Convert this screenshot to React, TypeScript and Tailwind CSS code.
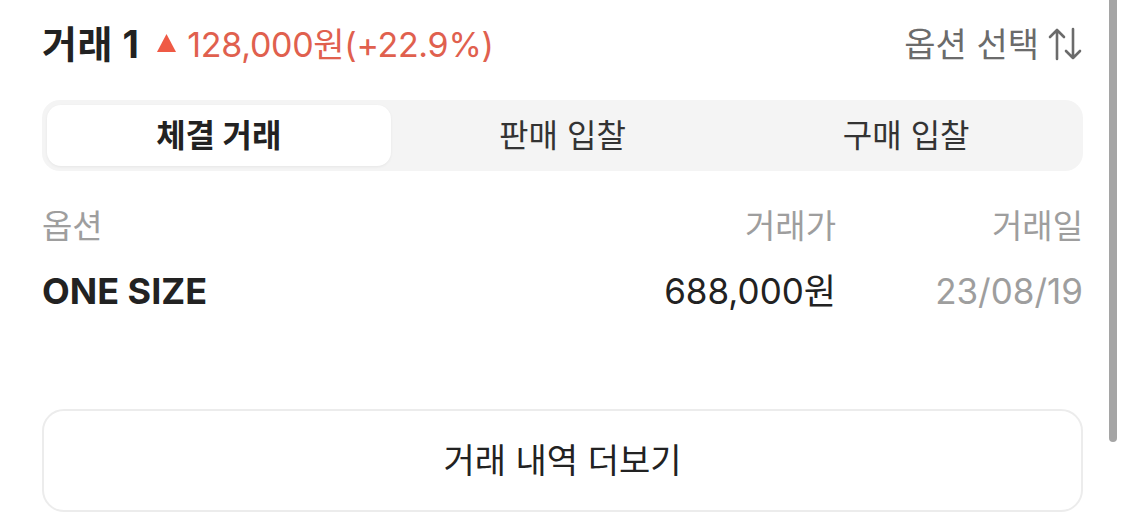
import React from "react";

const font = { fontFamily: 'Inter, "Noto Sans CJK KR", sans-serif' };

export default function App() {
  return (
    <div className="relative w-[1125px] h-[531px] bg-white overflow-hidden px-[42px]" style={font}>
      <div className="h-[88px] flex items-center justify-between">
        <div className="flex items-center">
          <span className="text-[38px] font-bold text-[#222] tracking-[0.5px]">거래 1</span>
          <svg width="19" height="18" viewBox="0 0 19 18" className="ml-[18px] mt-[-2px]">
            <polygon points="9.5,0 19,18 0,18" fill="#ef5a45" />
          </svg>
          <span className="ml-[11px] text-[34px] text-[#e0604e] tracking-[-0.3px]">128,000원(+22.9%)</span>
        </div>
        <div className="flex items-center text-[34px] text-[#6b6b6b]">
          <span>옵션 선택</span>
          <svg width="36" height="34" viewBox="0 0 36 34" className="ml-[8px]" fill="none" stroke="#6b6b6b" strokeWidth="2.6" strokeLinecap="round" strokeLinejoin="round">
            <path d="M10 32 V3 M3 10 L10 3 L17 10" />
            <path d="M26 2 V31 M19 24 L26 31 L33 24" />
          </svg>
        </div>
      </div>

      <div className="mt-[12px] h-[71px] rounded-[18px] bg-[#f4f4f4] p-[5px] grid grid-cols-3">
        <div className="rounded-[14px] bg-white shadow-[0_1px_3px_rgba(0,0,0,0.06)] flex items-center justify-center text-[32px] font-bold text-[#222]">
          체결 거래
        </div>
        <div className="flex items-center justify-center text-[32px] text-[#333]">판매 입찰</div>
        <div className="flex items-center justify-center text-[32px] text-[#333]">구매 입찰</div>
      </div>

      <div className="mt-[28px] h-[56px] flex items-center text-[33px] text-[#9e9e9e]">
        <div className="flex-1">옵션</div>
        <div className="text-right">거래가</div>
        <div className="w-[247px] text-right">거래일</div>
      </div>
      <div className="h-[72px] flex items-center text-[35px]">
        <div className="flex-1 font-bold text-[#222] text-[36px]">ONE SIZE</div>
        <div className="text-right text-[#222]">688,000원</div>
        <div className="w-[247px] text-right text-[#9e9e9e]">23/08/19</div>
      </div>

      <button className="mt-[82px] w-full h-[103px] rounded-[22px] border-2 border-[#ececec] bg-white flex items-center justify-center text-[34px] text-[#222]">
        거래 내역 더보기
      </button>

      <div className="absolute left-[1109px] top-0 w-[8px] h-[442px] rounded-b-full bg-[#a5a5a5]" />
    </div>
  );
}
